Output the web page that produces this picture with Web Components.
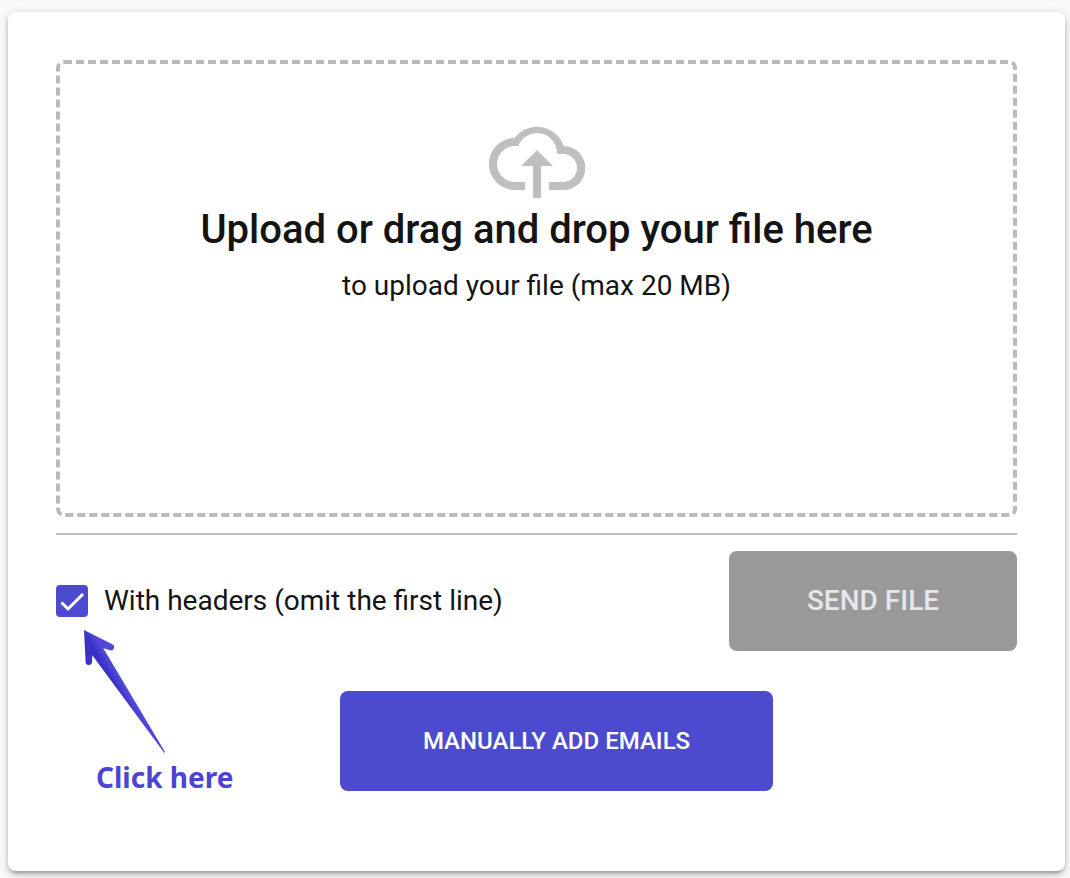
<!DOCTYPE html>
<html lang="en">
<head>
<meta charset="utf-8">
<meta name="viewport" content="width=device-width, initial-scale=1">
<title>Upload file</title>
<style>
  body { margin: 0; padding: 12px 5px 7px 8px; background: #fafafa; color: #141414; font-family: Roboto, sans-serif; }
</style>
</head>
<body>
<upload-card>
  <drop-zone>
    <span slot="title">Upload or drag and drop your file here</span>
    <span slot="hint">to upload your file (max 20 MB)</span>
  </drop-zone>
  <check-option slot="option">With headers (omit the first line)</check-option>
  <click-hint slot="note">Click here</click-hint>
  <action-button slot="send" disabled>SEND FILE</action-button>
  <action-button slot="manual">MANUALLY ADD EMAILS</action-button>
</upload-card>

<script>
const define = (name, html, setup) => {
  const template = document.createElement('template');
  template.innerHTML = html;
  customElements.define(name, class extends HTMLElement {
    constructor() {
      super();
      this.attachShadow({ mode: 'open' }).append(template.content.cloneNode(true));
    }
    connectedCallback() { if (setup) setup(this, this.shadowRoot); }
  });
};

define('upload-card', `
  <style>
    :host { display: block; box-sizing: border-box; padding: 48px 48px 80px; border-radius: 8px; background: #fff;
      box-shadow: 0 2px 10px rgba(0,0,0,.2), 0 4px 4px rgba(0,0,0,.14), 0 6px 2px -4px rgba(0,0,0,.12); }
    hr { height: 2px; margin: 16px 0; border: 0; background: #c0c0c0; }
    .row { position: relative; display: flex; align-items: center; justify-content: space-between; gap: 16px; }
    ::slotted([slot=send]) { flex: 0 1 288px; font-size: 28px; }
    ::slotted([slot=note]) { position: absolute; left: 28px; top: 79px; }
    .manual { display: flex; justify-content: center; padding: 40px 0 0 40px; }
    ::slotted([slot=manual]) { flex: 0 1 433px; font-size: 24px; }
  </style>
  <slot></slot>
  <hr>
  <div class="row"><slot name="option"></slot><slot name="send"></slot><slot name="note"></slot></div>
  <div class="manual"><slot name="manual"></slot></div>
`);

define('drop-zone', `
  <style>
    :host { display: block; }
    label { position: relative; display: flex; flex-direction: column; align-items: center; box-sizing: border-box;
      min-height: 457px; padding: 62px 16px; border: 4px dashed #bababa; border-radius: 8px; text-align: center; cursor: pointer; }
    input { position: absolute; inset: 0; width: 100%; height: 100%; opacity: 0; cursor: pointer; }
    svg { width: 96px; height: 72px; fill: #bfbfbf; }
    .title { margin-top: 8px; font-size: 40px; line-height: 48px; font-weight: 500; }
    .hint { margin-top: 16px; font-size: 28px; line-height: 32px; }
  </style>
  <label>
    <input type="file">
    <svg viewBox="0 0 96 72" aria-hidden="true">
      <path d="M36 64H26A26 26 0 0 1 25.7 12A28 28 0 0 1 74.7 20A22 22 0 0 1 74 64H60V56H74A14 14 0 0 0 74 28Q71 27.6 68 28A20 20 0 0 0 29.3 20H26A18 18 0 0 0 26 56H36Z"/>
      <path d="M48 24L64 40H52V72H44V40H32Z"/>
    </svg>
    <span class="title"><slot name="title"></slot></span>
    <span class="hint"><slot name="hint"></slot></span>
  </label>
`);

define('check-option', `
  <style>
    :host { display: block; }
    label { display: flex; align-items: center; gap: 16px; font-size: 28px; line-height: 32px; cursor: pointer; }
    .box { display: grid; flex: none; width: 32px; height: 32px; }
    .box > * { grid-area: 1 / 1; }
    input { appearance: none; width: 32px; height: 32px; margin: 0; border: 2px solid #4c4bcf; border-radius: 4px; background: #fff; }
    input:checked { background: #4c4bcf; }
    svg { z-index: 1; fill: none; stroke: #fff; stroke-width: 3; pointer-events: none; }
    input:not(:checked) + svg { display: none; }
  </style>
  <label>
    <span class="box">
      <input type="checkbox" checked>
      <svg viewBox="0 0 32 32" width="32" height="32" aria-hidden="true"><path d="M5.5 17.5L12 24L27 9"/></svg>
    </span>
    <span><slot></slot></span>
  </label>
`);

define('click-hint', `
  <style>
    :host { display: block; color: #4d44d4; font: bold 28px/32px "Noto Sans", sans-serif; white-space: nowrap; }
    svg { display: block; width: 84px; height: 124px; }
    .text { display: block; margin-top: 7px; padding-left: 12px; }
  </style>
  <svg viewBox="0 0 84 124" aria-hidden="true">
    <defs><linearGradient id="g" gradientUnits="userSpaceOnUse" x1="26" y1="53" x2="38" y2="46">
      <stop offset=".25" stop-color="#3a30c4"/><stop offset=".75" stop-color="#5147d8"/>
    </linearGradient></defs>
    <path fill="url(#g)" d="M0 0L28.3 14.3A3.2 3.2 0 0 1 26.2 20.3L19.3 18.2L81 122Q80.8 123 80 122.4L8.3 25.2L8 31.8A3.2 3.2 0 0 1 1.6 31.7Z"/>
  </svg>
  <span class="text"><slot></slot></span>
`);

define('action-button', `
  <style>
    :host { display: block; }
    button { display: block; width: 100%; min-height: 100px; padding: 0 16px; border: 0; border-radius: 8px;
      background: #4c4bcf; color: #fff; font: inherit; font-weight: 500; line-height: 32px; cursor: pointer; }
    button:disabled { background: #999; color: #e4e7ec; cursor: default; }
  </style>
  <button type="button"><slot></slot></button>
`, (host, root) => { root.querySelector('button').disabled = host.hasAttribute('disabled'); });
</script>
</body>
</html>
